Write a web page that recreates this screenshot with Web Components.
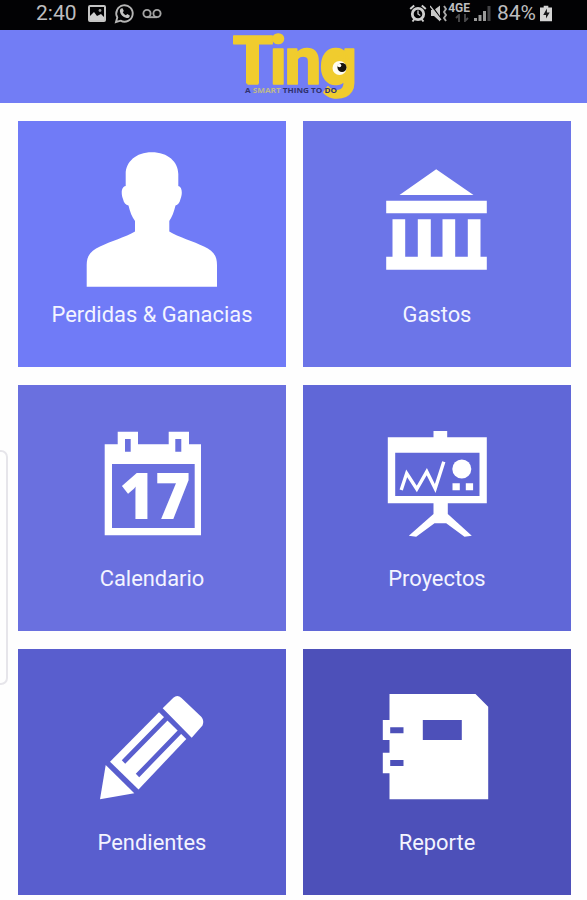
<!DOCTYPE html>
<html lang="es">
<head>
<meta charset="utf-8">
<title>Ting</title>
<style>
  body {
    margin: 0;
    height: 900px;
    overflow: hidden;
    background: #fefefe;
    font-family: Roboto, "Liberation Sans", sans-serif;
  }
</style>
</head>
<body>
<ting-app></ting-app>

<script>
// Android status bar
class StatusBar extends HTMLElement {
  constructor() {
    super();
    this.attachShadow({ mode: 'open' });
  }

  connectedCallback() {
    this.shadowRoot.innerHTML = `
      <style>
        :host {
          display: flex;
          justify-content: space-between;
          box-sizing: border-box;
          height: 30px;
          padding: 0 35px 3px 36px;
          background: #020204;
          color: #bdbdbf;
          font-size: 21px;
          line-height: 27px;
        }
        div { display: flex; align-items: center; }
        svg { display: block; }
        .photo { margin-left: 11px; }
        .whatsapp { margin-left: 8px; }
        .voicemail { margin-left: 7px; }
        .mute { margin-left: 3px; }
        .signal { margin: 0 6px 0 4px; }
        .net { font-size: 12px; font-weight: bold; line-height: 11px; height: 21px; letter-spacing: 0; display: block; }
        .net svg { margin-left: 7px; }
        .battery { margin-left: 4px; }
      </style>
      <div>
        <span>${this.getAttribute('time')}</span>
        <svg class="photo" width="18" height="17" viewBox="0 0 18 17">
          <rect x="1" y="1" width="16" height="15" rx="1" fill="none" stroke="#c4c4c4" stroke-width="2"/>
          <path d="M2 15V11l4-4 3 4 4-2 3 3v3z" fill="#d0d0d0"/>
          <circle cx="12" cy="5.5" r="1.4" fill="#999"/>
        </svg>
        <svg class="whatsapp" width="21" height="21" viewBox="0 0 21 21">
          <path d="M2 19l1.3-4.6A8.2 8.2 0 1 1 6.6 17.700z" fill="none" stroke="#b5b5b5" stroke-width="1.9"/>
          <path d="M7 5.500l1.600-.3 1.200 2.900-1 1.200c.8 1.500 1.700 2.300 3.200 3l1.200-1.200 2.600 1.300c0 2-1.600 2.800-3.200 2.500C8.800 14 6.300 11.200 5.900 8.200 5.900 7 6.300 6 7 5.500z" fill="#c4c4c4"/>
        </svg>
        <svg class="voicemail" width="20" height="12" viewBox="0 0 20 12">
          <g fill="none" stroke="#a4a4a4" stroke-width="1.9">
            <circle cx="5" cy="5.500" r="3.600"/>
            <circle cx="15" cy="5.500" r="3.600"/>
            <path d="M5 9.200h10"/>
          </g>
        </svg>
      </div>
      <div>
        <svg width="18" height="19" viewBox="0 0 18 19">
          <g fill="none" stroke="#cfcfcf">
            <circle cx="9" cy="10" r="5.700" stroke-width="2.800"/>
            <path d="M1.200 5l4-3.500M16.800 5l-4-3.500M3.500 17.500l2-2.500M14.500 17.500l-2-2.500" stroke-width="2"/>
            <path d="M9 6.500V10l2.300 1.500" stroke-width="1.300"/>
          </g>
        </svg>
        <svg class="mute" width="18" height="19" viewBox="0 0 18 19">
          <path d="M1 6h3l6-4.500v16L4 12H1z" fill="#c9c9c9"/>
          <path d="M1.500 1.500l10 14" stroke="#020204" stroke-width="1.300"/>
          <path d="M0 2l11 14" stroke="#c9c9c9" stroke-width="1.300"/>
          <path d="M14 2l2 3-2 3 2 3-2 3 2 3" fill="none" stroke="#a8a8a8" stroke-width="1.900"/>
        </svg>
        <span class="net">4GE<svg width="14" height="8" viewBox="0 0 14 8"><path d="M4 8V1L1 4M10 0v7l3-3" fill="none" stroke="#4c4c4e" stroke-width="1.800"/></svg></span>
        <svg class="signal" width="17" height="17" viewBox="0 0 17 17">
          <path d="M0 16v-3h3v3zM4.500 16v-6h3v6zM9 16V6h3v10z" fill="#9a9a9a"/>
          <path d="M13.500 16V1h3v15z" fill="#444447"/>
        </svg>
        <span>${this.getAttribute('battery')}</span>
        <svg class="battery" width="12" height="17" viewBox="0 0 13 17">
          <path d="M4 0h5v2h4v15H0V2h4z" fill="#d4d4d4"/>
          <path d="M7.500 3L3.500 10h3v4l4-6.500h-3z" fill="#17171a"/>
        </svg>
      </div>
    `;
  }
}
customElements.define('status-bar', StatusBar);

// Header with the logo and its slogan
class TingHeader extends HTMLElement {
  constructor() {
    super();
    this.attachShadow({ mode: 'open' });
    this.shadowRoot.innerHTML = `
      <style>
        :host {
          display: flex;
          justify-content: center;
          height: 73px;
          background: #727df5;
        }
        svg { display: block; overflow: visible; }
        .name {
          font-family: Roboto, sans-serif;
          font-weight: 700;
          font-size: 66px;
          fill: #f0cc2e;
          stroke: #f0cc2e;
          stroke-width: 1.6;
          stroke-linejoin: round;
        }
        .slogan {
          font-family: "Open Sans", sans-serif;
          font-weight: 700;
          font-size: 7px;
          fill: #2f3270;
        }
      </style>
      <svg width="127" height="73" viewBox="0 0 127 73">
        <circle cx="109" cy="38" r="13" fill="#f0cc2e"/>
        <text class="name" y="53.500" x="2.500 39.500 54.500 89.500">Ting</text>
        <path d="M22.500 8V53.500" stroke="#f0cc2e" stroke-width="13"/>
        <circle cx="109.500" cy="38" r="7" fill="#fffdf0"/>
        <circle cx="112" cy="37.500" r="4.500" fill="#17140c"/>
        <circle cx="109.500" cy="35.500" r="1.800" fill="#fff"/>
        <text class="slogan" x="15" y="63" textLength="92" lengthAdjust="spacingAndGlyphs">A <tspan fill="#bdb98c">SMART</tspan> THING TO DO</text>
      </svg>
    `;
  }
}
customElements.define('ting-header', TingHeader);

// Menu tile: icon in the default slot, text from the label attribute
class MenuTile extends HTMLElement {
  constructor() {
    super();
    this.attachShadow({ mode: 'open' });
  }

  connectedCallback() {
    this.shadowRoot.innerHTML = `
      <style>
        :host {
          display: flex;
          flex-direction: column;
          align-items: center;
          box-sizing: border-box;
          padding-top: 27px;
          background: var(--tile);
          color: #f3f4ff;
        }
        ::slotted(svg) { display: block; width: 140px; height: 140px; }
        .label {
          margin-top: 14px;
          font-size: 21.9px;
          line-height: 26px;
          white-space: nowrap;
        }
      </style>
      <slot></slot>
      <div class="label"></div>
    `;
    this.shadowRoot.querySelector('.label').textContent = this.getAttribute('label');
  }
}
customElements.define('menu-tile', MenuTile);

// Main screen
class TingApp extends HTMLElement {
  constructor() {
    super();
    this.attachShadow({ mode: 'open' });
    this.shadowRoot.innerHTML = `
      <style>
        :host { display: block; position: relative; height: 900px; }
        main {
          display: grid;
          grid-template-columns: 268px 268px;
          grid-template-rows: repeat(3, 246px);
          gap: 18px 17px;
          padding: 18px 16px 0 18px;
        }
        menu-tile svg { fill: #fff; }
        .handle {
          position: absolute;
          left: -10px;
          top: 450px;
          box-sizing: border-box;
          width: 18px;
          height: 235px;
          border: 2px solid #e6e5ea;
          border-radius: 7px;
          background: #fefefe;
        }
      </style>
      <status-bar time="2:40" battery="84%"></status-bar>
      <ting-header></ting-header>
      <main>
        <menu-tile label="Perdidas &amp; Ganacias" style="--tile:#707bf7">
          <svg viewBox="0 0 140 140">
            <path d="M69.700 4.300C86 4.300 96.300 14 96.300 26V38C100.500 39 100.500 46 98.500 51C97.500 55 96 57 93.500 57.500C92 64 90 69 87.300 73V83.500C96 89 112 93.500 122 98.500C131 103 135 107 135 117V138.700H4.700V117C4.700 107 9 103 18 98.500C28 93.500 44 89 53 83.500V73C50 69 48 64 46.500 57.500C43.500 57 42 55 41 51C39 46 39 39 43.700 38V26C43.700 14 54 4.300 69.700 4.300Z"/>
          </svg>
        </menu-tile>
        <menu-tile label="Gastos" style="--tile:#6c75e8">
          <svg viewBox="0 0 140 140">
            <path d="M69.200 21.300L106.500 47H32.500ZM19.200 52.700H119.800V65.300H19.200ZM19.200 121.700V108.700H25.500V71.300H38.200V108.700H50.800V71.300H63.800V108.700H75.500V71.300H88.200V108.700H100.800V71.300H113.500V108.700H119.800V121.700Z"/>
          </svg>
        </menu-tile>
        <menu-tile label="Calendario" style="--tile:#6a70df">
          <svg viewBox="0 0 140 140">
            <path fill-rule="evenodd" d="M22.700 32.300H35.700V19.700H56V32.300H86.700V19.700H107V32.300H119V123.300H22.700ZM30 52V116H112.700V52ZM43 27V39.700H48.700V27ZM93.300 27V39.700H99.300V27Z"/>
            <text x="37.500" y="107" font-family="Open Sans, sans-serif" font-weight="800" font-size="64" textLength="71" lengthAdjust="spacingAndGlyphs">17</text>
          </svg>
        </menu-tile>
        <menu-tile label="Proyectos" style="--tile:#6067d7">
          <svg viewBox="0 0 140 140">
            <path fill-rule="evenodd" d="M20.800 25.300H66.500V19H80.200V25.300H119.800V91.300H80.800V102L104.800 123.700L97.500 124.700L79.200 111.300H67.500L49.200 124.700L41.800 123.700L66.500 102V91.300H20.800ZM28.200 40.700V84H112.500V40.700Z"/>
            <path d="M34.200 78L39.700 61.300L49.800 77L59.800 59.700L68.200 76.500L76.800 49.700" fill="none" stroke="#fff" stroke-width="3.400"/>
            <circle cx="94.800" cy="57" r="9.500"/>
            <path d="M85.500 71.300h7.300v7h-7.300zM98.800 71.300h7.300v7h-7.300z"/>
          </svg>
        </menu-tile>
        <menu-tile label="Pendientes" style="--tile:#595ece">
          <svg viewBox="0 0 140 140">
            <path d="M77 36.300L104.300 63L56.500 113.500L28 85.700Z"/>
            <path d="M88 38.500L41.500 86M101 52.500L55.500 99.500" fill="none" stroke="var(--tile)" stroke-width="4.800"/>
            <path d="M80.700 32.300L91.300 21.700Q95.500 18 99.500 22L119.500 41Q122.500 45 120.500 49.500L109.700 61.700Z"/>
            <path d="M23.700 89L52.300 117.300L18 123.300Z"/>
          </svg>
        </menu-tile>
        <menu-tile label="Reporte" style="--tile:#4d50b9">
          <svg viewBox="0 0 140 140">
            <path fill-rule="evenodd" d="M22.500 18H108.500L121.200 30.700V123.300H22.500V97.300H15.800V76.700H22.500V64H15.800V44H22.500ZM23.200 51.300V57.300H36.500V51.300ZM23.200 84V90H36.500V84ZM55.800 44V64H94.800V44Z"/>
          </svg>
        </menu-tile>
      </main>
      <div class="handle"></div>
    `;
  }
}
customElements.define('ting-app', TingApp);
</script>
</body>
</html>
